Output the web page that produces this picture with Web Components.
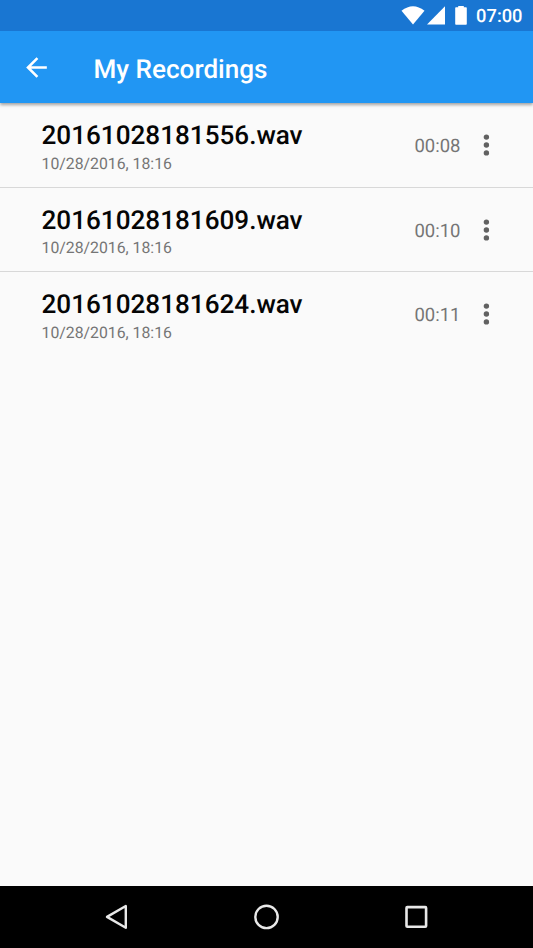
<!DOCTYPE html>
<html lang="en"><head><meta charset="utf-8"><title>My Recordings</title>
<style>html,body{margin:0;height:100%;overflow:hidden}body{font-family:Roboto,sans-serif;text-rendering:geometricPrecision}</style></head>
<body><recordings-app></recordings-app>
<script>
const define=(name,html)=>customElements.define(name,class extends HTMLElement{
  constructor(){super();this.attachShadow({mode:'open'}).innerHTML=html;}
});
define('status-bar',`<style>:host{display:flex;box-sizing:border-box;height:31px;background:#1976d2;color:#fff;align-items:center;justify-content:flex-end;padding-right:10.5px;font-size:18.3px;font-weight:500;line-height:22px}
svg{display:block}span{padding-top:3px}.w{margin-right:2px}.s{margin-right:10px}.b{margin-right:9px}</style>
<svg class="w" width="24" height="19" viewBox="0 0 24 19"><path fill="#fff" d="M.5 4.8Q12-4.4 23.5 4.8L12 18.5Z"/></svg>
<svg class="s" width="18" height="19" viewBox="0 0 18 19"><path fill="#fff" d="M18 .3V18.5H0Z"/></svg>
<svg class="b" width="12" height="19" viewBox="0 0 12 19"><path fill="#fff" d="M3.2 0h5.6v1.2H11q.8 0 .8.8V18q0 .8-.8.8H1q-.8 0-.8-.8V2q0-.8.8-.8h2.2z"/></svg>
<span><slot></slot></span>`);
define('app-bar',`<style>:host{display:flex;box-sizing:border-box;height:72.4px;background:#2196f3;color:#fff;align-items:center;padding-left:21px;box-shadow:0 2px 3px rgba(0,0,0,.35);z-index:1;flex:none;clip-path:inset(0 0 -8px 0)}
svg{display:block;margin-right:41.5px}h1{margin:0;font-size:26.1px;font-weight:500;line-height:32px;padding-top:5px}</style>
<svg width="31" height="31" viewBox="0 0 24 24"><path fill="#fff" d="M20 11H7.83l5.59-5.59L12 4l-8 8 8 8 1.41-1.41L7.83 13H20z"/></svg><h1><slot></slot></h1>`);
define('recording-row',`<style>:host{display:flex;box-sizing:border-box;height:84.4px;border-bottom:1px solid #d8d8d8;padding:0 36.5px 0 41.5px;align-items:center}
:host(:last-child){border-color:transparent}
.info{flex:1;padding-top:5px}.name{font-size:26.1px;line-height:31px;font-weight:500;color:#050505}.date{font-size:15.8px;line-height:20px;margin-top:1.6px;color:#757575}.time{font-size:18.5px;color:#757575;margin-right:16px;padding-top:2px}svg{display:block}</style>
<div class="info"><div class="name"><slot name="name"></slot></div><div class="date"><slot name="date"></slot></div></div>
<div class="time"><slot name="time"></slot></div>
<svg width="20" height="24" viewBox="0 0 20 24"><g fill="#616161"><circle cx="9.4" cy="4.1" r="2.7"/><circle cx="9.4" cy="12" r="2.7"/><circle cx="9.4" cy="19.9" r="2.7"/></g></svg>`);
define('navigation-bar',`<style>:host{display:flex;height:62px;background:#000;justify-content:center;align-items:center;gap:122px;flex:none}svg{display:block}</style>
<svg width="28" height="28" viewBox="0 0 28 28"><path d="M22.8 3V24.8L4 13.9Z" fill="none" stroke="#e8e8e8" stroke-width="2.4" stroke-linejoin="round"/></svg>
<svg width="28" height="28" viewBox="0 0 28 28"><circle cx="13.5" cy="13.9" r="11.2" fill="none" stroke="#e8e8e8" stroke-width="2.4"/></svg>
<svg width="28" height="28" viewBox="0 0 28 28"><rect x="3.5" y="4.1" width="19.6" height="19.6" rx=".8" fill="none" stroke="#e8e8e8" stroke-width="2.6"/></svg>`);
const row=(n,t)=>`<recording-row><span slot="name">${n}</span><span slot="date">10/28/2016, 18:16</span><span slot="time">${t}</span></recording-row>`;
define('recordings-app',`<style>:host{display:flex;flex-direction:column;height:948px;background:#fafafa}main{flex:1;padding-top:.2px}</style>
<status-bar>07:00</status-bar><app-bar>My Recordings</app-bar><main>${row('20161028181556.wav','00:08')}${row('20161028181609.wav','00:10')}${row('20161028181624.wav','00:11')}</main><navigation-bar></navigation-bar>`);
</script></body></html>
